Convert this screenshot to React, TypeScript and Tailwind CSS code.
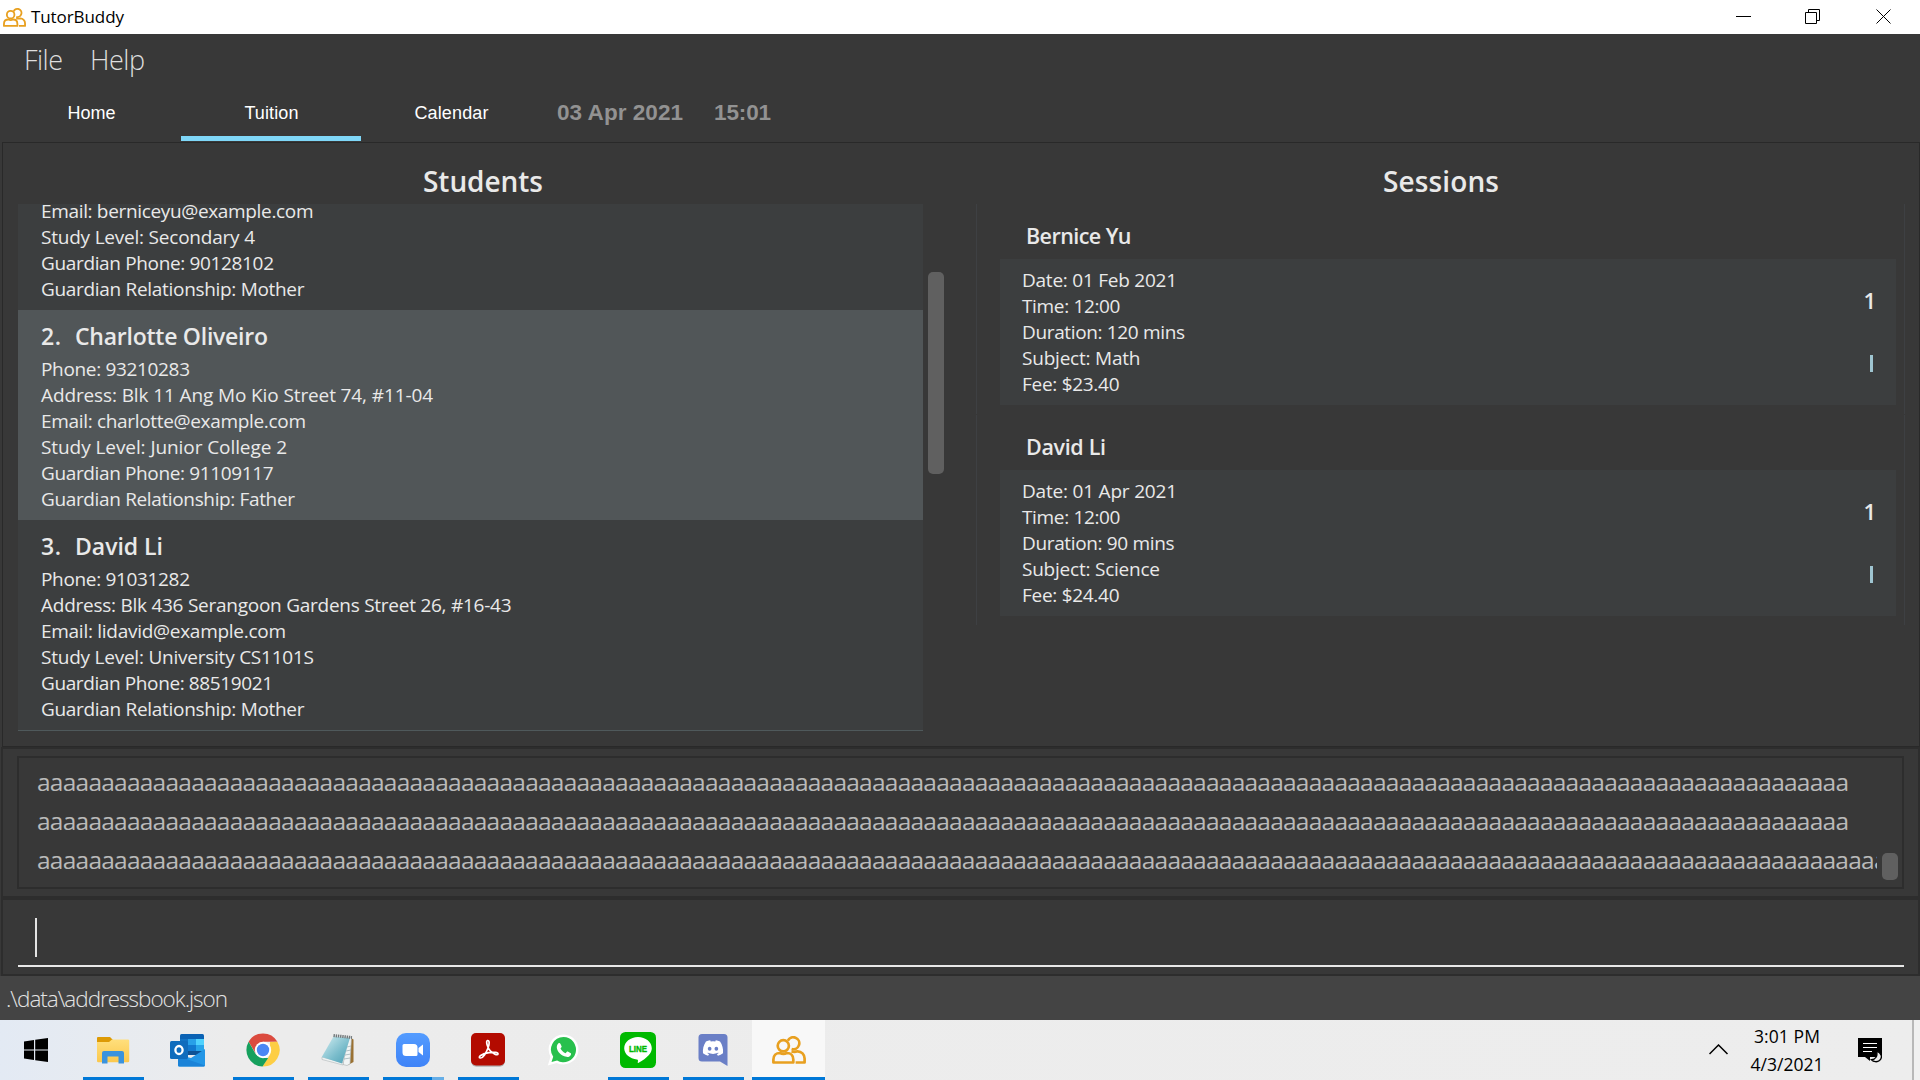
import { useLayoutEffect, useRef, useState } from "react";
import type { ReactNode } from "react";
import { FaDiscord } from "react-icons/fa";

/** Single line of text whose letter spacing is adjusted so that it spans `w` pixels. */
function Fit({ children, w, className = "" }: { children: string; w: number; className?: string }) {
  const ref = useRef<HTMLSpanElement>(null);
  const [spacing, setSpacing] = useState(0);
  useLayoutEffect(() => {
    if (!ref.current) return;
    const natural = ref.current.getBoundingClientRect().width - spacing * children.length;
    setSpacing((w - natural) / Math.max(1, children.length - 1));
  }, [children, w]);
  return (
    <span ref={ref} className={"inline-block whitespace-pre " + className} style={{ letterSpacing: spacing }}>
      {children}
    </span>
  );
}

function PeopleIcon({ className }: { className: string }) {
  return (
    <svg className={className} viewBox="0 0 34 28" fill="none" stroke="#e8a020" strokeWidth="2.7">
      <path d="M15.800 4.800a6 6 0 1 1 3.800 8.200" />
      <circle cx="11.300" cy="9.800" r="5.600" />
      <path d="M1.400 26.500v-3c0-4 2.700-6.500 6.500-6.500q3.500 1.700 7 0c3.800 0 6.400 2.500 6.400 6.500v3z" strokeLinejoin="round" />
      <path d="M19.500 15.400q2.800.8 6.200-.1c3.700 0 6.900 3.200 6.900 7.200v4h-9" strokeLinejoin="round" />
    </svg>
  );
}

function WindowsIcon() {
  return (
    <svg width="24" height="24" viewBox="0 0 24 24" fill="#000">
      <path d="M0 3.400L10 2v9.400H0zM11.200 1.800L24 0v11.400H11.200zM0 12.600h10V22L0 20.600zM11.200 12.600H24V24l-12.800-1.800z" />
    </svg>
  );
}

function FolderIcon() {
  return (
    <svg width="34" height="30" viewBox="0 0 34 30">
      <defs>
        <linearGradient id="folder" x1="0" y1="0" x2="0" y2="1">
          <stop offset="0" stopColor="#ffdf7c" />
          <stop offset="1" stopColor="#fbc84d" />
        </linearGradient>
      </defs>
      <path d="M1 8V3a1 1 0 0 1 1-1h12l3 3-3 3z" fill="#dd9a05" />
      <path d="M1 7h12l3-2.600h16a1.200 1.200 0 0 1 1.200 1.200V26a1.200 1.200 0 0 1-1.200 1.200H2.200A1.200 1.200 0 0 1 1 26z" fill="url(#folder)" />
      <path d="M6 28.500V18a2 2 0 0 1 2-2h18a2 2 0 0 1 2 2v10.500h-5.500v-7h-11v7z" fill="#3a93de" />
    </svg>
  );
}

function OutlookIcon() {
  return (
    <svg width="36" height="34" viewBox="0 0 36 34">
      <path d="M10 2.500A1.500 1.500 0 0 1 11.500 1h21A1.500 1.500 0 0 1 34 2.500V22H10z" fill="#0a62b4" />
      <path d="M10 6h8v6h-8z" fill="#1273c4" />
      <path d="M18 6h8v6h-8z" fill="#28a0e8" />
      <path d="M26 6h8v6h-8z" fill="#50d2fd" />
      <path d="M18 12h8v6h-8z" fill="#1279cf" />
      <path d="M26 12h8v6h-8z" fill="#28a5ea" />
      <path d="M18 18h16v4H18z" fill="#0d5295" />
      <path d="M35 16v16a1.500 1.500 0 0 1-1.500 1.500h-24A1.500 1.500 0 0 1 8 32V22l13 3z" fill="#2396e6" />
      <path d="M8 23l27 9.500a1.500 1.500 0 0 1-1.500 1H9.500A1.500 1.500 0 0 1 8 32z" fill="#1a83d8" />
      <rect x="0" y="8" width="18" height="18" rx="1.500" fill="#0f6cbd" />
      <ellipse cx="9" cy="17" rx="3.600" ry="4" fill="none" stroke="#fff" strokeWidth="2.300" />
    </svg>
  );
}

function ChromeIcon() {
  return (
    <svg width="34" height="34" viewBox="0 0 34 34">
      <path d="M2.620 8.700A16.600 16.600 0 0 1 31.400 8.700H17L10 21z" fill="#db4b3f" />
      <path d="M31.400 8.700A16.600 16.600 0 0 1 16.500 33.600L24.200 21.200 24 9z" fill="#fdce44" />
      <path d="M2.620 8.700L9.800 21.200 17 25h5.200L16.500 33.600A16.600 16.600 0 0 1 2.620 8.700z" fill="#16a05d" />
      <circle cx="17" cy="17" r="8.200" fill="#fff" />
      <circle cx="17" cy="17" r="6.200" fill="#4b87f4" />
    </svg>
  );
}

function NotepadIcon() {
  return (
    <svg width="34" height="34" viewBox="0 0 34 34">
      <defs>
        <linearGradient id="pad" x1="0" y1="0" x2="1" y2="1">
          <stop offset="0" stopColor="#d4eef2" />
          <stop offset="0.600" stopColor="#79bccb" />
          <stop offset="1" stopColor="#4f9fb4" />
        </linearGradient>
      </defs>
      <path d="M30 5l2.500 1.500V29L27 32z" fill="#9a7132" />
      <path d="M30.500 4L29 31l-3 1.500-4-1L27 5z" fill="#f1f4f4" stroke="#a9b0b2" strokeWidth=".6" />
      <path d="M1 24l21 5.500v2.500L1 26.500z" fill="#eef2f2" stroke="#a5adaf" strokeWidth=".5" />
      <path d="M12.500 3.500L29 5 21 30.500.800 24z" fill="url(#pad)" />
      <path d="M26 14l4-1M25 18l5-1M24 22l6-1M23 26l6-1" stroke="#9fb3b8" strokeWidth=".8" />
      <path d="M12.500 2.500L31 4.500" stroke="#72787a" strokeWidth="3" strokeDasharray="1.400 .8" />
    </svg>
  );
}

function ZoomIcon() {
  return (
    <svg width="34" height="34" viewBox="0 0 34 34">
      <defs>
        <linearGradient id="zm" x1="0" y1="0" x2="0" y2="1">
          <stop offset="0" stopColor="#549cff" />
          <stop offset="1" stopColor="#3f83f7" />
        </linearGradient>
      </defs>
      <rect width="34" height="34" rx="10" fill="url(#zm)" />
      <path d="M6.500 12.500a1.500 1.500 0 0 1 1.500-1.500h10a3.500 3.500 0 0 1 3.500 3.500v7a1.500 1.500 0 0 1-1.500 1.500H10a3.500 3.500 0 0 1-3.500-3.500zM22.500 15l4.500-3.500v11L22.500 19z" fill="#fff" />
    </svg>
  );
}

function AcrobatIcon() {
  return (
    <svg width="34" height="34" viewBox="0 0 34 34">
      <rect x=".3" y="1.300" width="33.400" height="32.400" rx="5" fill="#000" opacity=".25" />
      <rect width="34" height="32.500" rx="5" fill="#b30b00" />
      <path
        d="M16.500 7.500c2.200-.3 2 3.600.600 7.300-1.800 5-5.200 10.600-7.800 10.200-3-.6 1.200-4.400 8.700-5.400 5-.7 9.400-.2 9 1.400-.5 2-5.200-.3-7.800-3.200-2.700-3-4.700-9.800-2.700-10.300z"
        fill="none"
        stroke="#fff"
        strokeWidth="1.700"
      />
    </svg>
  );
}

function WhatsAppIcon() {
  return (
    <svg width="32" height="32" viewBox="0 0 32 32">
      <path d="M16.500.500a15 15 0 1 1-6.800 28.400L.800 31.500l2.700-8.700A15 15 0 0 1 16.500.500z" fill="#fff" />
      <path d="M16.500 3a12.600 12.600 0 1 1-6.400 23.500L4.500 28l1.700-5.300A12.600 12.600 0 0 1 16.500 3z" fill="#28c04d" />
      <path
        d="M11.500 9.200c.7-.5 1.500-.3 1.900.5l1.200 2.600c.2.600-.3 1.200-1.100 2.100 1.200 2.300 2.700 3.700 5.200 4.800.9-1.200 1.400-1.900 2.100-1.600l2.600 1.300c.8.400.8.900.4 2-.7 1.600-2.700 2.300-4.500 1.900-5.300-1.200-9.200-5.300-9.500-9.300-.1-1.800.7-3.500 1.700-4.300z"
        fill="#fff"
      />
    </svg>
  );
}

function LineIcon() {
  return (
    <svg width="36" height="36" viewBox="0 0 36 36">
      <rect width="36" height="36" rx="5.500" fill="#00b900" />
      <path d="M18 5c7.600 0 13.800 5 13.800 11.200 0 5-4.600 9.600-13.200 14.600-1 .6-.9 0-.7-1.400.2-1.300.1-1.900-.9-2C9.800 26.600 4.200 22 4.200 16.200 4.200 10 10.400 5 18 5z" fill="#fff" />
      <text x="18" y="20" textAnchor="middle" textLength="18" lengthAdjust="spacingAndGlyphs" fontFamily="Liberation Sans" fontWeight="700" fontSize="9" fill="#00b900" stroke="#00b900" strokeWidth=".4">
        LINE
      </text>
    </svg>
  );
}

function DiscordIcon() {
  return (
    <div className="grid place-items-center">
      <svg className="col-start-1 row-start-1" width="30" height="32" viewBox="0 0 30 32">
        <path d="M4 0h22a3.500 3.500 0 0 1 3.500 3.500V32L22 27.500H4A3.500 3.500 0 0 1 .500 24V3.500A3.500 3.500 0 0 1 4 0z" fill="#6a7fc6" />
      </svg>
      <FaDiscord className="col-start-1 row-start-1 mb-1 h-[22px] w-[22px] text-white" />
    </div>
  );
}

const tasks: { icon: ReactNode; state: "idle" | "open" | "multi" | "active" }[] = [
  { icon: <FolderIcon />, state: "open" },
  { icon: <OutlookIcon />, state: "idle" },
  { icon: <ChromeIcon />, state: "open" },
  { icon: <NotepadIcon />, state: "open" },
  { icon: <ZoomIcon />, state: "multi" },
  { icon: <AcrobatIcon />, state: "open" },
  { icon: <WhatsAppIcon />, state: "idle" },
  { icon: <LineIcon />, state: "open" },
  { icon: <DiscordIcon />, state: "open" },
  { icon: <PeopleIcon className="mb-px ml-0.5 h-7 w-[34px]" />, state: "active" },
];

const indicator = {
  idle: "w-[61px]",
  open: "w-[61px] bg-[#0078d7]",
  multi: "w-[61px] border-r-[12px] border-[#66aee7] bg-[#0078d7]",
  active: "w-[73px] bg-[#0078d7]",
};

type Line = [string, number];

const students: { no: string; name: string; nameW: number; lines: Line[]; selected?: boolean }[] = [
  {
    no: "1.",
    name: "Bernice Yu",
    nameW: 118,
    lines: [
      ["Email: berniceyu@example.com", 272.5],
      ["Study Level: Secondary 4", 214],
      ["Guardian Phone: 90128102", 233],
      ["Guardian Relationship: Mother", 263.5],
    ],
  },
  {
    no: "2.",
    name: "Charlotte Oliveiro",
    nameW: 193,
    selected: true,
    lines: [
      ["Phone: 93210283", 149],
      ["Address: Blk 11 Ang Mo Kio Street 74, #11-04", 392],
      ["Email: charlotte@example.com", 265],
      ["Study Level: Junior College 2", 246],
      ["Guardian Phone: 91109117", 232.5],
      ["Guardian Relationship: Father", 254],
    ],
  },
  {
    no: "3.",
    name: "David Li",
    nameW: 88,
    lines: [
      ["Phone: 91031282", 149],
      ["Address: Blk 436 Serangoon Gardens Street 26, #16-43", 470.5],
      ["Email: lidavid@example.com", 245],
      ["Study Level: University CS1101S", 273],
      ["Guardian Phone: 88519021", 232],
      ["Guardian Relationship: Mother", 263.5],
    ],
  },
];

const sessions: { name: string; nameW: number; lines: Line[] }[] = [
  {
    name: "Bernice Yu",
    nameW: 105.5,
    lines: [
      ["Date: 01 Feb 2021", 155],
      ["Time: 12:00", 98.5],
      ["Duration: 120 mins", 163],
      ["Subject: Math", 118.5],
      ["Fee: $23.40", 97.5],
    ],
  },
  {
    name: "David Li",
    nameW: 80,
    lines: [
      ["Date: 01 Apr 2021", 155],
      ["Time: 12:00", 98.5],
      ["Duration: 90 mins", 152.5],
      ["Subject: Science", 138],
      ["Fee: $24.40", 97.5],
    ],
  },
];

function Details({ lines }: { lines: Line[] }) {
  return (
    <div className="text-[19px] leading-[26px]">
      {lines.map(([text, w]) => (
        <div key={text} className="h-[26px]">
          <Fit w={w}>{text}</Fit>
        </div>
      ))}
    </div>
  );
}

export default function App() {
  return (
    <div className="flex h-[1080px] w-[1920px] flex-col overflow-hidden bg-[#383838] font-['Open_Sans',sans-serif] text-[#e9e9e9]">
      <header className="flex h-[34px] shrink-0 items-center bg-white text-black">
        <PeopleIcon className="ml-[3px] h-[19px] w-[23px]" />
        <Fit w={93} className="ml-[5px] text-[17px] leading-[36px]">TutorBuddy</Fit>
        <svg className="ml-auto" width="184" height="34" viewBox="0 0 184 34" fill="none" stroke="#000">
          <path d="M0 16.500h15M69.500 12.500h11v11h-11zM72.500 12.500v-3h11v11h-3M140.500 9.500l14 14M154.500 9.500l-14 14" />
        </svg>
      </header>

      <nav className="flex h-[54px] shrink-0 pl-6 text-[27px] font-light leading-[52px] text-[#dedede]">
        <div className="w-[66px]">
          <Fit w={39}>File</Fit>
        </div>
        <Fit w={55}>Help</Fit>
      </nav>

      <div className="flex h-[54px] shrink-0 font-['Liberation_Sans',Arial,sans-serif] text-[18px] text-white">
        <div className="flex w-[181px] justify-center pl-0.5 leading-[50px]">
          <Fit w={48}>Home</Fit>
        </div>
        <div className="flex h-[53px] w-[180px] justify-center border-b-[5px] border-[#7fd7f8] pl-px leading-[50px]">
          <Fit w={54}>Tuition</Fit>
        </div>
        <div className="flex w-[180px] justify-center pl-px leading-[50px]">
          <Fit w={74}>Calendar</Fit>
        </div>
        <div className="ml-4 flex gap-[31px] text-[22.5px] font-bold leading-[50px] text-[#929292]">
          <Fit w={126}>03 Apr 2021</Fit>
          <Fit w={57}>15:01</Fit>
        </div>
      </div>

      <main className="ml-[2px] flex h-[605px] shrink-0 border border-[#292929]">
        <section className="flex w-[955px] flex-col">
          <h1 className="h-[61px] pl-[420px] text-[28px] font-semibold leading-[76px]">
            <Fit w={120}>Students</Fit>
          </h1>
          <div className="flex h-[527px]">
            <div className="ml-[15px] flex w-[905px] flex-col border-b border-[#4f595b]">
              {students.map((s, i) => (
                <article key={s.no} className={"shrink-0 pl-[23px] " + (i === 0 ? "h-[106px] overflow-hidden bg-[#3c3e3f]" : s.selected ? "h-[210px] bg-[#515658] pt-[13px]" : "h-[210px] bg-[#3c3e3f] pt-[13px]")}>
                  {i > 0 && (
                    <h2 className="mb-[5px] flex h-7 text-[23px] font-semibold leading-[27px]">
                      <div className="w-[34px]">
                        <Fit w={20}>{s.no}</Fit>
                      </div>
                      <Fit w={s.nameW}>{s.name}</Fit>
                    </h2>
                  )}
                  <div className={i === 0 ? "-mt-1.5" : ""}>
                    <Details lines={s.lines} />
                  </div>
                </article>
              ))}
            </div>
            <div className="ml-[5px] mt-[68px] h-[202px] w-4 rounded-[5px] bg-[#606060]" />
          </div>
        </section>
        <section className="flex w-[961px] flex-col">
          <h1 className="h-[61px] pl-[425px] text-[28px] font-semibold leading-[76px]">
            <Fit w={116}>Sessions</Fit>
          </h1>
          {sessions.map((s) => (
            <article key={s.name} className="mb-px ml-[18px] h-[210px] w-[929px] border-x border-[#3e4043] pl-[23px]">
              <h2 className="h-[55px] pl-[26px] text-[21.5px] font-semibold leading-[64px]">
                <Fit w={s.nameW}>{s.name}</Fit>
              </h2>
              <div className="flex h-[146px] w-[896px] justify-between bg-[#3c3e3f] pl-[22px] pr-[21px] pt-2">
                <Details lines={s.lines} />
                <div className="flex w-[14px] flex-col items-end pt-[21px]">
                  <span className="-mr-px h-[67px] text-[22px] font-semibold leading-6">1</span>
                  <span className="mr-0.5 h-[17px] w-[3px] bg-[#9fc5d1]" />
                </div>
              </div>
            </article>
          ))}
        </section>
      </main>

      <section className="ml-px h-[151px] shrink-0 border-2 border-[#2d2d2d] px-[14px] pt-[7px]">
        <div className="flex h-[133px] w-[1887px] border-2 border-[#2d2d2d] pl-[18px]">
          <div className="w-[1840px] overflow-hidden pt-1 text-[24.500px] leading-[39px] text-[#bababa]">
            <Fit w={1812}>{"a".repeat(141)}</Fit>
            <Fit w={1812}>{"a".repeat(141)}</Fit>
            <Fit w={1850.5}>{"a".repeat(144)}</Fit>
          </div>
          <div className="ml-[5px] mt-[95px] h-[27px] w-4 rounded-[5px] bg-[#606060]" />
        </div>
      </section>

      <section className="ml-px h-[78px] shrink-0 border-2 border-[#2d2d2d] pl-[15px] pr-[13px]">
        <div className="h-[67px] w-[1886px] border-b-2 border-[#e8e8e8] pl-[17px] pt-[18px]">
          <div className="h-[39px] w-0.5 bg-[#e4e4e4]" />
        </div>
      </section>

      <footer className="h-[44px] shrink-0 bg-[#444444] pl-1.5 text-[22.5px] font-light leading-[46px] text-[#e3e3e3]">
        <Fit w={222}>.\data\addressbook.json</Fit>
      </footer>

      <div className="flex h-[60px] shrink-0 bg-linear-to-r from-[#e3eaf4] via-[#ececec] via-12% to-[#ededed] text-black">
        <div className="flex w-[76px] items-center pl-6">
          <WindowsIcon />
        </div>
        {tasks.map((t, i) => (
          <div key={i} className={"flex flex-col items-center " + (t.state === "active" ? "ml-px w-[73px] bg-[#f8f8f8]" : "w-[75px]")}>
            <div className="flex h-[57px] items-center pr-0.5 pt-[3px]">{t.icon}</div>
            <div className={"h-[3px] " + indicator[t.state]} />
          </div>
        ))}
        <div className="ml-auto flex">
          <svg className="mt-6" width="20" height="12" viewBox="0 0 20 12" fill="none" stroke="#000" strokeWidth="1.500">
            <path d="M.500 10l9-9 9 9" />
          </svg>
          <div className="ml-[20px] mr-px flex w-[76px] flex-col items-center pt-[2px] text-[17.5px] leading-7">
            <Fit w={66}>3:01 PM</Fit>
            <Fit w={73}>4/3/2021</Fit>
          </div>
          <svg className="ml-8 mt-[18px]" width="24" height="25" viewBox="0 0 24 25">
            <path d="M0 0h24v19H12v4l-5-4H0z" fill="#000" />
            <path d="M5 5.500h14M5 9.500h14M5 13.500h9" stroke="#fff" strokeWidth="1.200" />
            <path d="M18.500 13c5 2 6.500 6.500 3 9.500-2.500 2-6 1.500-8-.8 4 0 6.500-3.700 5-8.700z" fill="#ececec" stroke="#000" strokeWidth="1.300" />
          </svg>
          <div className="ml-[30px] w-2 border-l-2 border-[#b8b8b8] bg-[#f0f0f0]" />
        </div>
      </div>
    </div>
  );
}
